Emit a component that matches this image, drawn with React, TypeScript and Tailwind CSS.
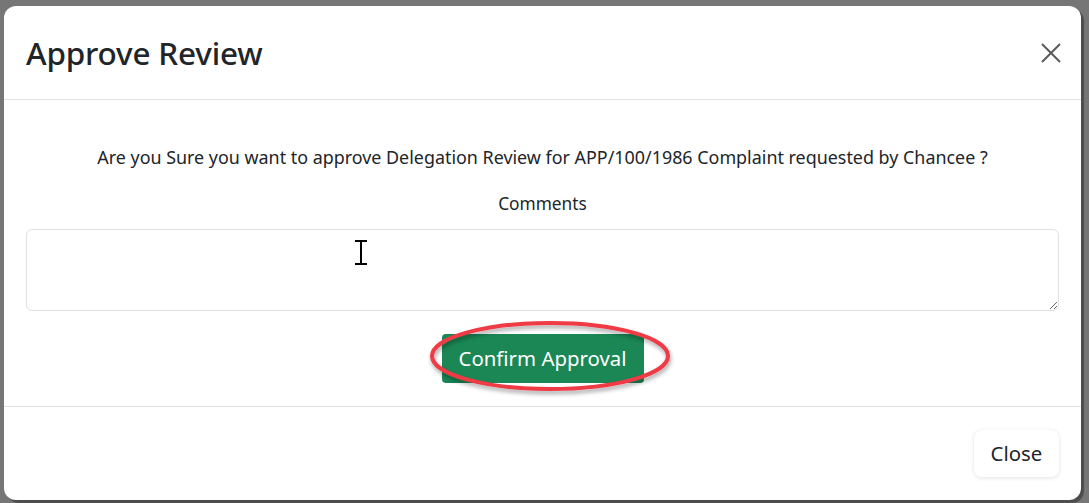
import React from "react";

const font = { fontFamily: '"Noto Sans", "Open Sans", sans-serif' };

const App = () => {
  return (
    <div className="w-full h-[503px] bg-[#767676] overflow-hidden pt-[6px] pl-[4px]" style={font}>
      <div className="relative w-[1077px] h-[494px] bg-white rounded-[12px] shadow-[3px_3px_1px_rgba(0,0,0,0.35)] flex flex-col">
        {/* Header */}
        <div className="h-[94px] flex items-center justify-between px-[22px] border-b border-[#dee2e6]">
          <h5 className="text-[31.5px] font-medium text-[#212529] tracking-[-0.2px]">Approve Review</h5>
          <button className="mr-[-2px]">
            <svg width="20" height="20" viewBox="0 0 20 20">
              <path d="M1 1L19 19M19 1L1 19" stroke="#5a5a5a" strokeWidth="2" fill="none" />
            </svg>
          </button>
        </div>

        {/* Body */}
        <div className="relative flex flex-col items-center px-[22px] pt-[45px] pb-[23px] border-b border-[#dee2e6]">
          <p className="text-[17.9px] leading-6 text-[#212529]">
            Are you Sure you want to approve Delegation Review for APP/100/1986 Complaint requested by Chancee ?
          </p>
          <label className="mt-[23px] text-[17.3px] leading-6 text-[#212529]">Comments</label>
          <textarea className="mt-[13px] w-full h-[82px] rounded-[6px] border border-[#dee2e6] outline-none" />
          <button className="mt-[23px] h-[49px] w-[202px] bg-[#1a8754] text-white text-[20.4px] rounded-[4px]">
            Confirm Approval
          </button>

          {/* text cursor */}
          <svg className="absolute left-[350px] top-[140px]" width="14" height="25" viewBox="0 0 14 25">
            <path d="M1 1h12M1 24h12M7 1v23" stroke="#000" strokeWidth="2" fill="none" />
          </svg>

          {/* annotation ellipse */}
          <svg className="absolute left-[424px] top-[219px]" width="250" height="80" viewBox="0 0 250 80">
            <defs>
              <filter id="sh" x="-10%" y="-20%" width="120%" height="150%">
                <feDropShadow dx="1" dy="3" stdDeviation="2" floodColor="#000" floodOpacity="0.35" />
              </filter>
            </defs>
            <ellipse cx="122" cy="37" rx="118" ry="33" fill="none" stroke="#ee3a44" strokeWidth="4" filter="url(#sh)" />
          </svg>
        </div>

        {/* Footer */}
        <div className="flex-1 flex items-center justify-end px-[22px]">
          <button className="h-[47px] w-[85px] rounded-[8px] bg-white text-[20.4px] text-[#212529] shadow-[0_1px_4px_rgba(0,0,0,0.12)]">
            Close
          </button>
        </div>
      </div>
    </div>
  );
};

export default App;
